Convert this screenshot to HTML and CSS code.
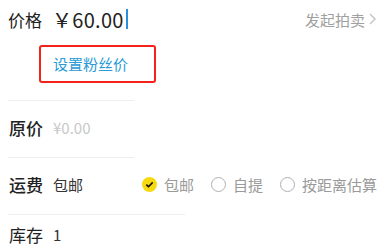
FILE: index.html
```html
<!DOCTYPE html>
<html lang="zh-CN">
<head>
    <meta charset="UTF-8">
    <title>发布商品</title>
    <link rel="stylesheet" href="styles.css">
</head>
<body>
<div class="page">
    <div class="price-block">
        <div class="price-row">
            <span class="label">价格</span>
            <span class="price-value">￥60.00</span>
            <span class="cursor"></span>
            <a class="auction" href="javascript:;">发起拍卖
                <svg width="9" height="14" viewBox="0 0 9 14"><path d="M2 2l5 5-5 5" fill="none" stroke="#c8c8c8" stroke-width="1.5"/></svg>
            </a>
        </div>
        <a class="fan-price" href="javascript:;">设置粉丝价</a>
    </div>
    <div class="divider"></div>

    <div class="row">
        <span class="label label-strong">原价</span>
        <span class="placeholder">¥0.00</span>
    </div>
    <div class="divider"></div>

    <div class="row">
        <span class="label label-strong">运费</span>
        <span class="value fee-value">包邮</span>
        <div class="options">
            <label class="option">
                <span class="radio radio-on">
                    <svg width="15" height="15" viewBox="0 0 15 15"><path d="M4.3 7.6l2.2 2.1 4.2-4.3" fill="none" stroke="#111" stroke-width="1.6"/></svg>
                </span>包邮
            </label>
            <label class="option"><span class="radio"></span>自提</label>
            <label class="option"><span class="radio"></span>按距离估算</label>
        </div>
    </div>
    <div class="divider divider-long"></div>

    <div class="row row-last">
        <span class="label">库存</span>
        <span class="value">1</span>
    </div>
</div>
</body>
</html>
```

FILE: styles.css
```css
body{
    margin: 0;
    background-color: #fff;
    font-family: "Noto Sans CJK SC", "Noto Sans", sans-serif;
    color: #222;
    overflow: hidden;
}
a{
    text-decoration: none;
}
.page{
    width: 387px;
}
.price-block{
    padding-bottom: 17px;
}
.price-row{
    display: flex;
    align-items: center;
    box-sizing: border-box;
    height: 40px;
    padding: 0 10px 2px 8px;
}
.label{
    width: 44px;
    flex-shrink: 0;
    font-size: 17px;
    color: #222;
}
.label-strong{
    font-weight: 500;
}
.price-value{
    font-size: 20px;
    color: #222;
    letter-spacing: 0.3px;
}
.cursor{
    width: 2px;
    height: 20px;
    margin-left: 2px;
    background-color: #2a8fe0;
}
.auction{
    display: flex;
    align-items: center;
    gap: 3px;
    margin-left: auto;
    font-size: 15px;
    color: #a0a0a0;
}
.fan-price{
    display: flex;
    align-items: center;
    box-sizing: border-box;
    width: 117px;
    height: 38px;
    margin: 5px 0 0 39px;
    padding: 0 0 2px 12px;
    border: solid 2px #f5221b;
    border-radius: 3px;
    font-size: 15px;
    color: #2b9bd6;
}
.divider{
    width: 126px;
    height: 1px;
    margin-left: 8px;
    background-color: #eeeeee;
}
.divider-long{
    width: 177px;
}
.row{
    display: flex;
    align-items: center;
    box-sizing: border-box;
    height: 56px;
    padding: 0 0 4px 9px;
}
.row-last{
    height: 38px;
    padding-bottom: 0;
}
.placeholder{
    font-size: 15px;
    color: #c8c8c8;
}
.value{
    font-size: 15px;
    color: #333;
}
.fee-value{
    width: 89px;
}
.options{
    display: flex;
    align-items: center;
    gap: 17px;
}
.option{
    display: flex;
    align-items: center;
    gap: 7px;
    font-size: 15px;
    color: #9a9a9a;
}
.radio{
    display: block;
    box-sizing: border-box;
    width: 15px;
    height: 15px;
    border: solid 1.5px #b0b0b0;
    border-radius: 50%;
}
.radio-on{
    border: none;
    background-color: #f7d90f;
}
.radio-on svg{
    display: block;
}
```
